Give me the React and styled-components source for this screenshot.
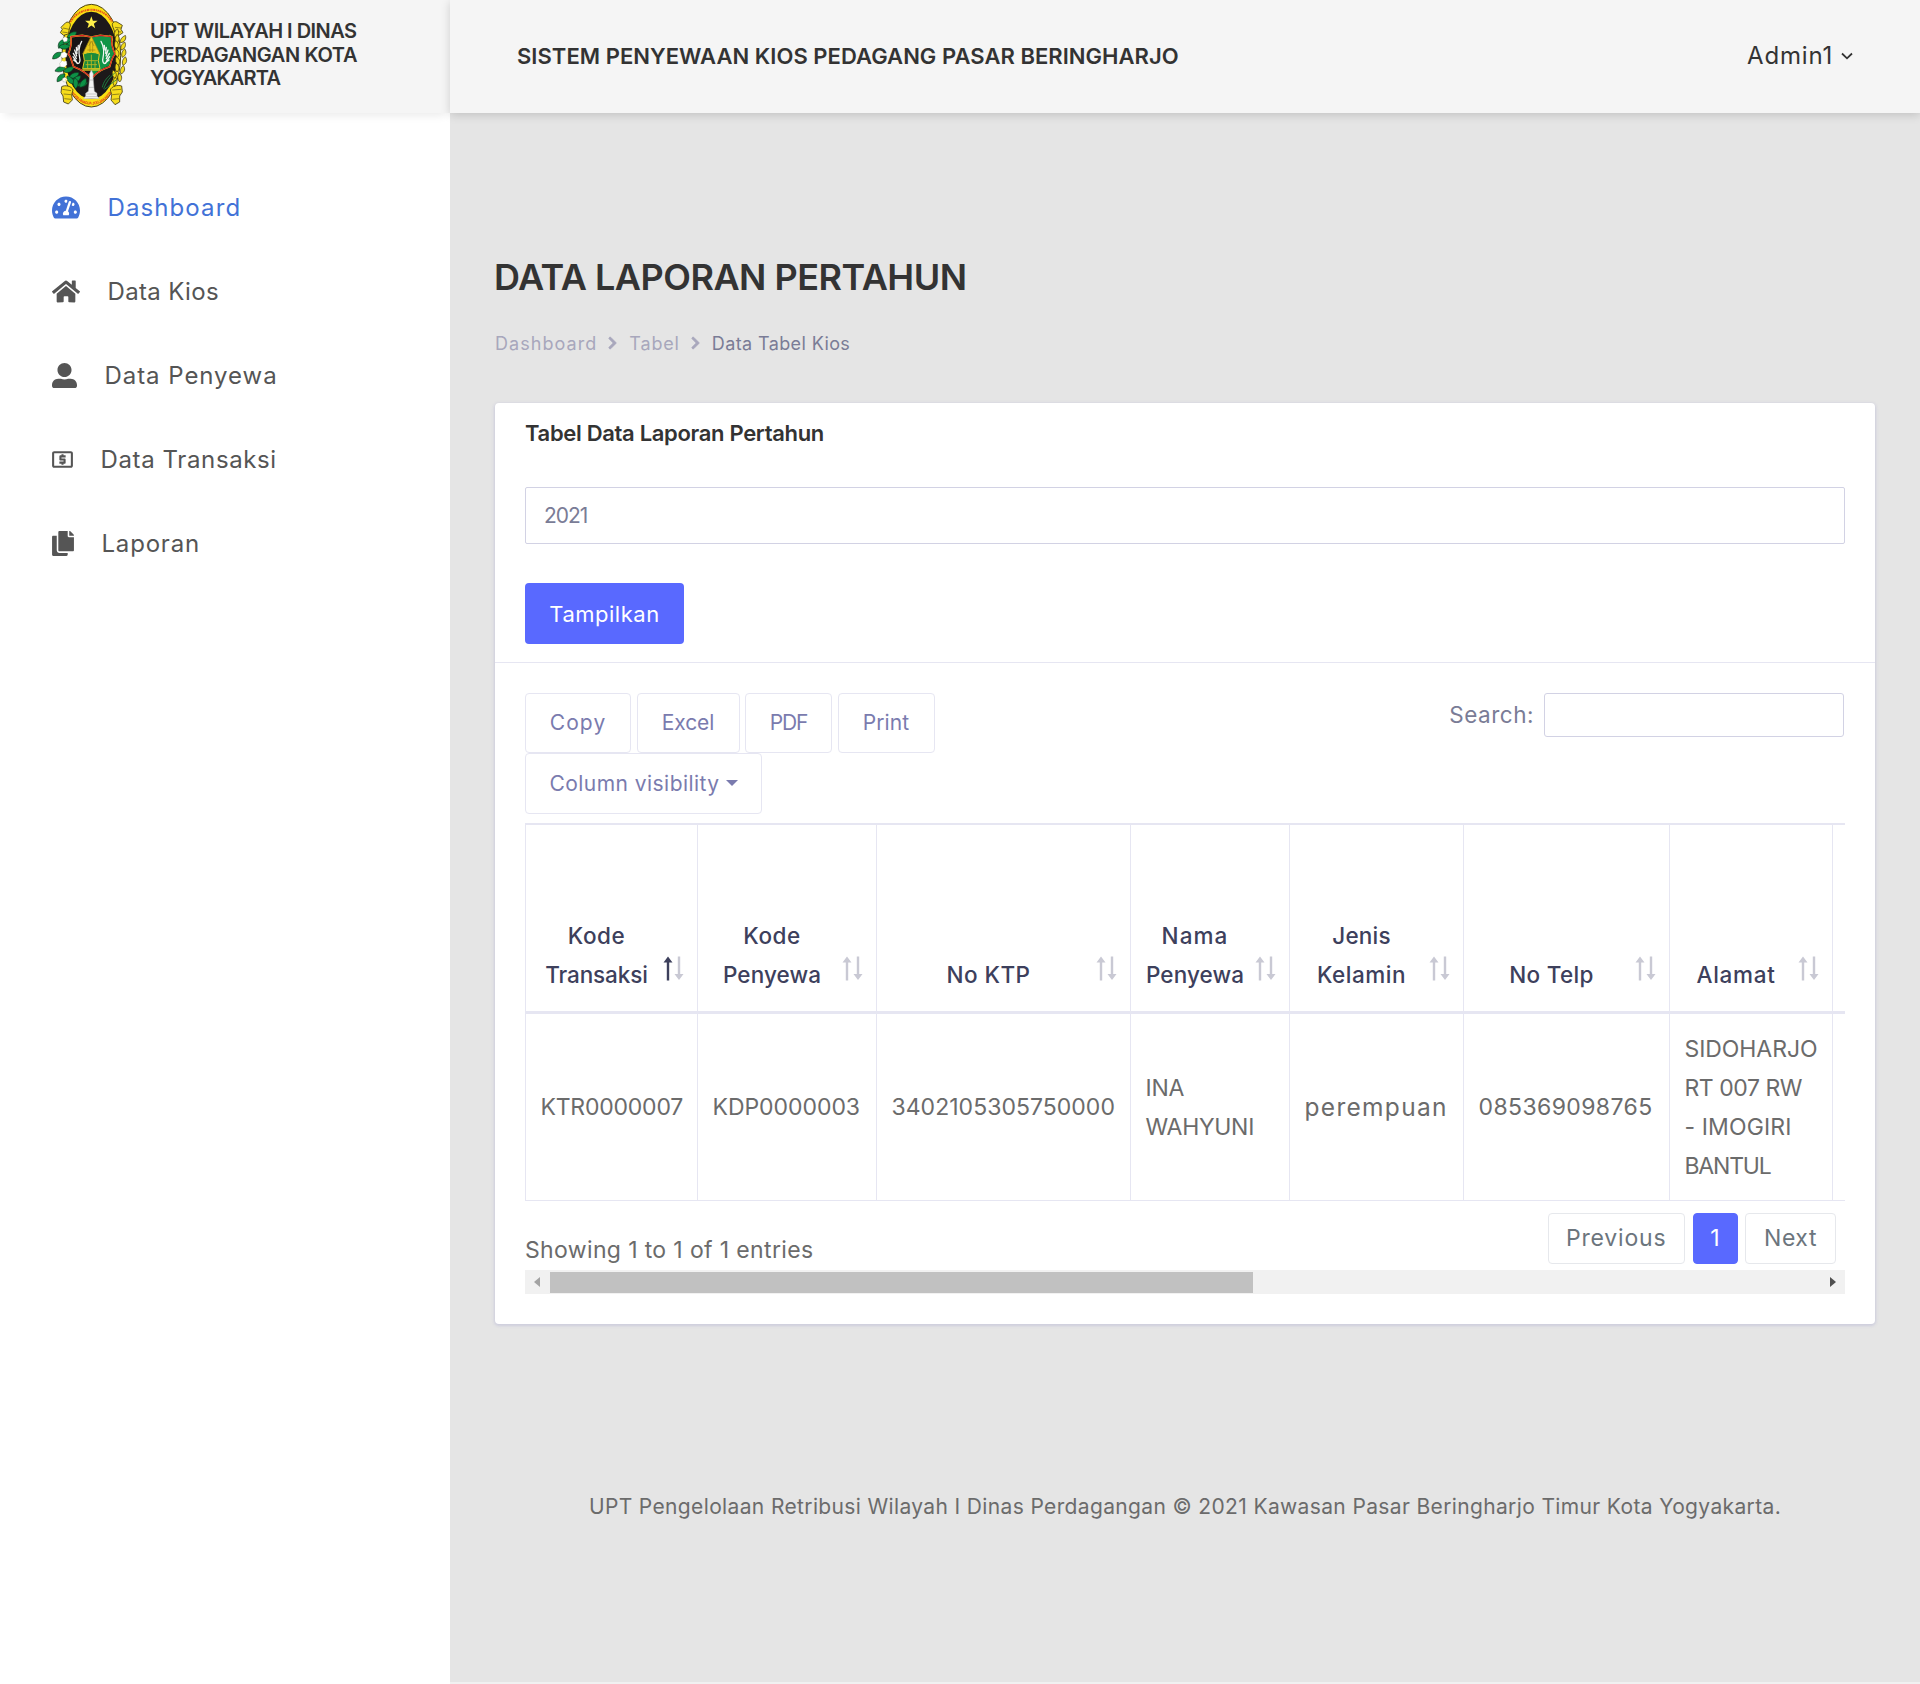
import React from "react";
import styled, { createGlobalStyle } from "styled-components";
import { FaTachometerAlt, FaHome, FaUserAlt, FaCopy, FaChevronRight } from "react-icons/fa";
import { MdLocalAtm } from "react-icons/md";

const color = {
  primary: "#5969ff",
  link: "#4272d7",
  heading: "#333333",
  body: "#6b6b6b",
  muted: "#7a7c96",
  line: "#e6e6f2",
  field: "#d2d2e4",
};

const GlobalStyle = createGlobalStyle`
  *, *::before, *::after { box-sizing: border-box; }
  body {
    margin: 0;
    background: #fff;
    color: ${color.body};
    font-family: Inter, "Open Sans", sans-serif;
    font-size: 23px;
    font-weight: 400;
    font-kerning: normal;
  }
  h1, h2, h3, p, ul, ol { margin: 0; padding: 0; list-style: none; }
  button, input { font: inherit; }
`;

const Text = styled.span`
  letter-spacing: ${(p) => p.$track || 0}px;
  white-space: nowrap;
  ${(p) => p.$size && `font-size: ${p.$size}px;`}
`;

/* ---------- frame ---------- */

const Page = styled.div`
  display: grid;
  grid-template-columns: 450px 1fr;
  grid-template-rows: 113px 1fr;
  height: 1684px;
  overflow: hidden;
`;

const Brand = styled.a`
  display: flex;
  align-items: flex-start;
  padding-left: 41px;
  background: #f5f5f5;
  box-shadow: 0 8px 8px -5px rgba(0, 0, 0, 0.08);
  z-index: 1;
`;

const BrandName = styled.h3`
  display: flex;
  flex-direction: column;
  margin: 20px 0 0 9px;
  color: ${color.heading};
  font-size: 20px;
  font-weight: 600;
  line-height: 23.5px;
`;

const TopBar = styled.header`
  display: flex;
  align-items: center;
  justify-content: space-between;
  padding: 0 67px 2px 67px;
  background: #f5f5f5;
  box-shadow: 0 2px 9px rgba(0, 0, 0, 0.16);
  z-index: 2;
`;

const AppTitle = styled.h3`
  color: ${color.heading};
  font-size: 22px;
  font-weight: 600;
`;

const Account = styled.div`
  display: flex;
  align-items: center;
  gap: 8px;
  color: ${color.heading};
  font-weight: 400;
`;

/* ---------- sidebar ---------- */

const Sidebar = styled.nav`
  padding: 52px 0 0 52px;
  background: #fff;
`;

const NavItem = styled.a`
  display: flex;
  align-items: center;
  gap: 27.5px;
  height: 84px;
  color: ${(p) => (p.$active ? color.link : "#555555")};
  font-size: 24px;

  svg {
    flex: none;
    width: ${(p) => p.$icon}px;
    height: 25px;
    margin: 0 ${(p) => (p.$inset ? -2 : 0)}px;
  }
`;

/* ---------- content ---------- */

const Main = styled.main`
  display: flex;
  flex-direction: column;
  margin-bottom: 2px;
  padding: 140px 45px 0;
  background: #e5e5e5;
  box-shadow: 0 2px 0 #f1f1f1;
`;

const PageTitle = styled.h1`
  margin-left: -1px;
  color: ${color.heading};
  font-size: 36px;
  font-weight: 600;
  line-height: 48px;
`;

const Breadcrumb = styled.ol`
  display: flex;
  align-items: center;
  height: 30px;
  margin: 27px 0 45px 0;
  color: #a8a7bc;
  font-size: 18px;

  li { display: flex; align-items: center; }
  li:last-child { color: ${color.muted}; }
  svg {
    width: 9px;
    height: 14px;
    margin: 0 12px 0 11px;
    stroke: currentColor;
    stroke-width: 30px;
  }
`;

const Card = styled.section`
  height: 921px;
  background: #fff;
  border-radius: 4px;
  box-shadow: 0 1px 3px 1px rgba(154, 154, 204, 0.32);
`;

const CardHead = styled.div`
  height: 260px;
  padding: 17px 30px 0;
  border-bottom: 1px solid ${color.line};
`;

const CardTitle = styled.h3`
  color: ${color.heading};
  font-size: 22px;
  font-weight: 600;
  line-height: 27px;
`;

const YearField = styled.div`
  display: flex;
  align-items: center;
  height: 57px;
  margin: 40px 0 39px;
  padding-left: 18px;
  border: 1px solid ${color.field};
  border-radius: 2px;
  color: ${color.muted};
  font-size: 21px;
`;

const Submit = styled.button`
  display: flex;
  align-items: center;
  justify-content: center;
  width: 159px;
  height: 61px;
  padding: 0;
  border: 0;
  border-radius: 4px;
  background: ${color.primary};
  color: #fff;
  font-size: 22px;
  font-weight: 400;
`;

const CardBody = styled.div`
  padding: 30px;
`;

const Toolbar = styled.div`
  display: flex;
  justify-content: space-between;
  height: 130px;
  padding-right: 1px;
`;

const ExportButtons = styled.div`
  display: flex;
  flex-wrap: wrap;
  align-content: flex-start;
  gap: 0 5.5px;
  width: 440px;
`;

const ExportButton = styled.button`
  display: flex;
  align-items: center;
  justify-content: center;
  gap: 6px;
  width: ${(p) => p.$width}px;
  height: ${(p) => p.$height || 60}px;
  padding: 0 0 1px;
  border: 1px solid ${color.line};
  border-radius: 4px;
  background: #fff;
  color: #7a7bae;
  font-size: 21px;
`;

const Caret = styled.i`
  border: 6px solid transparent;
  border-top-color: currentColor;
  border-bottom: 0;
`;

const Search = styled.label`
  display: flex;
  align-items: center;
  gap: 10px;
  height: 44px;
  color: ${color.muted};
  font-size: 22.5px;

  ${Text} { padding-bottom: 2px; }
`;

const SearchInput = styled.input`
  width: 300px;
  height: 44px;
  border: 1px solid ${color.field};
  border-radius: 3px;
  background: #fff;
`;

/* ---------- table ---------- */

const Table = styled.table`
  width: 1320px;
  table-layout: fixed;
  border-collapse: separate;
  border-spacing: 0;
  line-height: 39px;
`;

const HeadCell = styled.th`
  position: relative;
  width: ${(p) => p.$width}px;
  height: 191px;
  padding: 0 ${(p) => (p.$width > 20 ? "40px 17px 10px" : "0")};
  border: solid ${color.line};
  border-width: 2px 0 3px 1px;
  color: #3d405c;
  font-size: 22.5px;
  font-weight: 500;
  text-align: center;
  vertical-align: bottom;
`;

const SortMark = styled.svg`
  position: absolute;
  right: 11px;
  bottom: 30px;
  width: 24px;
  height: 25px;
`;

const Cell = styled.td`
  height: 187px;
  padding: ${(p) => (p.$empty ? 0 : "1px 0 0 14.5px")};
  border: solid ${color.line};
  border-width: 0 0 1px 1px;
  vertical-align: middle;
`;

const TableFoot = styled.div`
  display: flex;
  justify-content: space-between;
  height: 69px;
  padding: 12px 9px 0 0;
`;

const Summary = styled.div`
  padding-top: 23px;
  line-height: 28px;
`;

const Pager = styled.div`
  display: flex;
  gap: 7.5px;
`;

const PageButton = styled.button`
  display: flex;
  align-items: center;
  justify-content: center;
  width: ${(p) => p.$width}px;
  height: 51px;
  padding: 0 0 2px;
  border: 1px solid ${(p) => (p.$current ? color.primary : "#e6e8ec")};
  border-radius: 4px;
  background: ${(p) => (p.$current ? color.primary : "#fff")};
  color: ${(p) => (p.$current ? "#fff" : "#6c757d")};
`;

const ScrollTrack = styled.div`
  display: flex;
  align-items: center;
  justify-content: space-between;
  height: 24px;
  padding: 0 9px;
  background: #f1f1f1;
`;

const ScrollThumb = styled.div`
  width: 703px;
  height: 21px;
  margin: 0 auto 0 10px;
  background: #c1c1c1;
`;

const ScrollArrow = styled.i`
  border: 5.5px solid transparent;
  border-${(p) => p.$side}: 6px solid ${(p) => p.$tone};
  border-${(p) => (p.$side === "left" ? "right" : "left")}-width: 0;
`;

const Copyright = styled.footer`
  margin-top: 168px;
  font-size: 21px;
  line-height: 30px;
  text-align: center;
`;

/* ---------- drawings ---------- */

const leaf = "M0 0C4-9 14-13 24-11C22-1 12 6 0 0Z";

const leftLeaves = [
  [78, 112, -5], [72, 118, 150], [66, 128, 0], [74, 140, -10], [54, 140, 20], [62, 158, 170],
  [74, 205, 190], [68, 215, 0], [72, 222, 160], [84, 232, 0], [92, 246, -10], [78, 228, 70],
  [108, 256, 10], [116, 262, -30], [104, 266, -70],
];
const rightLeaves = [
  [222, 112, -50], [226, 130, -60], [238, 128, -30], [226, 148, -70], [240, 150, -40], [230, 172, -80],
  [244, 172, -50], [232, 196, -80], [246, 196, -50], [228, 216, -70], [240, 222, -50], [222, 236, -80],
  [236, 246, -70], [220, 258, -60], [212, 130, -80],
];

const Emblem = () => (
  <svg width="100" height="115" viewBox="0 0 300 345">
    <ellipse cx="151" cy="167" rx="88" ry="154" fill="#fbe112" stroke="#4a4318" strokeWidth="3" />
    <ellipse cx="151" cy="166" rx="78" ry="131" fill="#1d191a" />
    <path d="M88 66C116 17 186 17 214 66" fill="none" stroke="#e5531b" strokeWidth="6" strokeDasharray="4 2 6 2 3 2" />
    <path id="emblem-motto" d="M91 279C118 326 184 326 213 277" fill="none" />
    <text fill="#e5401b" fontSize="12" fontWeight="700" fontFamily="Liberation Sans, sans-serif">
      <textPath href="#emblem-motto" textLength="148">KOTA PRADJA JOGJAKARTA</textPath>
    </text>
    <g fill="#f6dc1c" stroke="#3d3714" strokeWidth="2.5">
      <path d="M74 68C84 62 92 72 86 82L82 102L68 106L58 98L64 88L60 82Z" />
      <path d="M228 66C218 62 210 70 216 82L222 98L234 106L246 98L240 88L244 76Z" />
      <path d="M62 260C72 254 92 258 96 270L92 284L94 300L82 312L68 306L66 288L60 278Z" />
      <path d="M242 258C230 254 212 258 208 270L212 284L210 300L222 314L236 306L236 288L244 276Z" />
    </g>
    <g fill="none" stroke="#3d3714" strokeWidth="1.6">
      <path d="M66 84L84 88M64 96L80 98M64 268L90 272M68 282L90 284M70 296L90 298" />
      <path d="M222 82L240 84M224 94L240 96M214 270L240 268M214 284L236 282M214 298L234 296" />
    </g>
    <g fill="#0d9146" stroke="#12351f" strokeWidth="1.5">
      {leftLeaves.map(([x, y, r], i) => (
        <path key={i} d={leaf} transform={`translate(${x} ${y}) rotate(${r}) scale(1.25)`} />
      ))}
    </g>
    <g fill="#fff" stroke="#87906f" strokeWidth="1">
      <path d="M64 116l8-6 8 5-2 9-9 2zM60 160l10-5 9 6-2 10-12 4-6-6zM56 190l9-10 12 4 1 10-8 8-12-2zM64 236l8-4 7 6-4 8-9-1z" />
    </g>
    <path d="M60 180l8-4 6 4-4 5zM70 240l5-2 3 5z" fill="#f4df2c" />
    <g fill="#f1da1d" stroke="#3b3510" strokeWidth="2">
      {rightLeaves.map(([x, y, r], i) => (
        <path key={i} d={leaf} transform={`translate(${x} ${y}) rotate(${r})`} />
      ))}
    </g>
    <path d="M188 266C196 246 206 232 222 218M190 268C206 258 214 246 226 240M184 262C188 244 196 236 206 226" fill="none" stroke="#1b8b43" strokeWidth="2.5" />
    <path d="M151 49l4.700 13.200 14 .3-11.200 8.500 4.100 13.400-11.600-8-11.600 8 4.100-13.400-11.200-8.500 14-.3z" fill="#fff04a" />
    <path d="M90 110L124 106 151 111 178 106 212 110C210 132 216 150 222 162C212 172 210 188 206 200C188 206 170 212 151 236C132 212 114 206 98 200C92 188 92 172 82 162C88 148 92 130 90 110Z" fill="#161414" stroke="#f0d51e" strokeWidth="5" />
    <path d="M151 112L178 108 210 112C208 132 214 150 219 162C210 172 207 186 203 198C186 204 168 212 151 232Z" fill="#119447" />
    <path d="M90 110L124 106 151 111 178 106 212 110C210 132 216 150 222 162C212 172 210 188 206 200C188 206 170 212 151 236C132 212 114 206 98 200C92 188 92 172 82 162C88 148 92 130 90 110Z" fill="none" stroke="#d8232a" strokeWidth="3.500" />
    <path d="M151 108L177 162H125Z" fill="#e7c91c" stroke="#9a7f12" strokeWidth="2" />
    <path d="M143 138l8-14 8 14M139 150h24M147 122v36M155 122v36" fill="none" stroke="#8d7410" strokeWidth="1.600" />
    <path d="M127 162Q151 152 175 162L172 182 177 206H125L130 182Z" fill="#1c8a3c" stroke="#e4cb20" strokeWidth="3" />
    <path d="M132 182h38M134 194h34M151 164v40M140 184v20M162 184v20" stroke="#c4ba20" strokeWidth="2.500" fill="none" />
    <path d="M124 210H178" stroke="#e8d020" strokeWidth="4" />
    <g fill="none" stroke="#f2f5f3" strokeWidth="3.800" strokeLinecap="round">
      <path d="M122 124C112 140 112 158 117 180C116 194 108 192 106 186M112 136L110 150M106 142L108 160M101 150L107 168M97 160L106 176M96 170L106 184M98 180L110 190" />
      <path d="M180 124C190 140 190 158 185 180C186 194 194 192 196 186M190 136L192 150M196 142L194 160M201 150L195 168M205 160L196 176M206 170L196 184M204 180L192 190" />
    </g>
    <path d="M151 210l6 12-1 8 4 44 8 6v8l7 8h-48l7-8v-8l8-6 4-44-1-8z" fill="#f3f3f3" stroke="#aaa" strokeWidth="1.500" />
    <path d="M146 240h10M143 262h16M136 282h30M132 290h38" stroke="#999" strokeWidth="1.500" />
  </svg>
);

const Chevron = () => (
  <svg width="12" height="8" viewBox="0 0 12 8">
    <path d="M1 1.500L6 6.300 11 1.500" fill="none" stroke="currentColor" strokeWidth="1.800" />
  </svg>
);

const Sort = ({ ascending }) => (
  <SortMark viewBox="0 0 24 25">
    <path d="M6 .5L10.500 6.500H7.200V24.500H4.800V6.500H1.500Z" fill={ascending ? "#3d405c" : "#c9c9d4"} />
    <path d="M17 24L12.500 18H15.800V.5H18.200V18H21.500Z" fill="#c9c9d4" />
  </SortMark>
);

/* ---------- data ---------- */

const brandLines = [
  ["UPT WILAYAH I DINAS", -0.52],
  ["PERDAGANGAN KOTA", -0.36],
  ["YOGYAKARTA", -0.8],
];

const nav = [
  { label: "Dashboard", Icon: FaTachometerAlt, icon: 28, track: 1.1, active: true },
  { label: "Data Kios", Icon: FaHome, icon: 28, track: 0.35 },
  { label: "Data Penyewa", Icon: FaUserAlt, icon: 25, track: 0.95 },
  { label: "Data Transaksi", Icon: MdLocalAtm, icon: 25, track: 0.62, inset: true },
  { label: "Laporan", Icon: FaCopy, icon: 22, track: 0.8 },
];

const exportsRow = [
  ["Copy", 106, 1.1],
  ["Excel", 103, -0.1],
  ["PDF", 87, -1.1],
  ["Print", 97, 0.1],
];

const columns = [
  { width: 172, head: [["Kode", 0.55], ["Transaksi", -0.12]], cell: [["KTR0000007", -0.22]], ascending: true },
  { width: 179, head: [["Kode", 0.55], ["Penyewa", 0.08]], cell: [["KDP0000003", -0.05]] },
  { width: 254, head: [["No KTP", 0.47]], cell: [["3402105305750000", 0.03]] },
  { width: 159, head: [["Nama", 1.1], ["Penyewa", 0.08]], cell: [["INA", -0.29], ["WAHYUNI", -0.29]] },
  { width: 174, head: [["Jenis", 0.2], ["Kelamin", 0.5]], cell: [["perempuan", 1.3, 24.5]] },
  { width: 206, head: [["No Telp", 0.3]], cell: [["085369098765", 0.39]] },
  {
    width: 163,
    head: [["Alamat", 0.7]],
    cell: [["SIDOHARJO", -0.07], ["RT 007 RW", -0.46], ["- IMOGIRI", 0.12], ["BANTUL", -1.2]],
  },
  { width: 13, head: [], cell: [] },
];

const Lines = ({ lines }) =>
  lines.map(([text, track, size], i) => (
    <React.Fragment key={text}>
      {i > 0 && <br />}
      <Text $track={track} $size={size}>{text}</Text>
    </React.Fragment>
  ));

export default function App() {
  return (
    <>
      <GlobalStyle />
      <Page>
        <Brand>
          <Emblem />
          <BrandName>
            {brandLines.map(([line, track]) => (
              <Text key={line} $track={track}>{line}</Text>
            ))}
          </BrandName>
        </Brand>
        <TopBar>
          <AppTitle>
            <Text $track={0.04}>SISTEM PENYEWAAN KIOS PEDAGANG PASAR BERINGHARJO</Text>
          </AppTitle>
          <Account>
            <Text $track={0.8} $size={24}>Admin1</Text>
            <Chevron />
          </Account>
        </TopBar>

        <Sidebar>
          {nav.map(({ label, Icon, icon, track, active, inset }) => (
            <NavItem key={label} $active={active} $icon={icon} $inset={inset}>
              <Icon />
              <Text $track={track}>{label}</Text>
            </NavItem>
          ))}
        </Sidebar>

        <Main>
          <PageTitle>
            <Text $track={-0.5}>DATA LAPORAN PERTAHUN</Text>
          </PageTitle>
          <Breadcrumb>
            <li><Text $track={1.05}>Dashboard</Text><FaChevronRight /></li>
            <li><Text $track={0.84}>Tabel</Text><FaChevronRight /></li>
            <li><Text $track={0.39}>Data Tabel Kios</Text></li>
          </Breadcrumb>

          <Card>
            <CardHead>
              <CardTitle><Text $track={-0.32}>Tabel Data Laporan Pertahun</Text></CardTitle>
              <YearField><Text $track={-1}>2021</Text></YearField>
              <Submit><Text $track={0.5}>Tampilkan</Text></Submit>
            </CardHead>
            <CardBody>
              <Toolbar>
                <ExportButtons>
                  {exportsRow.map(([label, width, track]) => (
                    <ExportButton key={label} $width={width}><Text $track={track}>{label}</Text></ExportButton>
                  ))}
                  <ExportButton $width={237} $height={61}>
                    <Text $track={0.46}>Column visibility</Text>
                    <Caret />
                  </ExportButton>
                </ExportButtons>
                <Search>
                  <Text $track={0.5}>Search:</Text>
                  <SearchInput />
                </Search>
              </Toolbar>

              <Table>
                <thead>
                  <tr>
                    {columns.map((c, i) => (
                      <HeadCell key={i} $width={c.width}>
                        <Lines lines={c.head} />
                        {c.head.length > 0 && <Sort ascending={c.ascending} />}
                      </HeadCell>
                    ))}
                  </tr>
                </thead>
                <tbody>
                  <tr>
                    {columns.map((c, i) => (
                      <Cell key={i} $empty={c.cell.length === 0}><Lines lines={c.cell} /></Cell>
                    ))}
                  </tr>
                </tbody>
              </Table>

              <TableFoot>
                <Summary><Text $track={0.36}>Showing 1 to 1 of 1 entries</Text></Summary>
                <Pager>
                  <PageButton $width={137.5}><Text $track={0.82}>Previous</Text></PageButton>
                  <PageButton $width={45} $current>1</PageButton>
                  <PageButton $width={91}><Text $track={0.56}>Next</Text></PageButton>
                </Pager>
              </TableFoot>
              <ScrollTrack>
                <ScrollArrow $side="right" $tone="#a3a3a3" />
                <ScrollThumb />
                <ScrollArrow $side="left" $tone="#505050" />
              </ScrollTrack>
            </CardBody>
          </Card>

          <Copyright>
            <Text $track={0.36}>
              UPT Pengelolaan Retribusi Wilayah I Dinas Perdagangan © 2021 Kawasan Pasar Beringharjo Timur Kota Yogyakarta.
            </Text>
          </Copyright>
        </Main>
      </Page>
    </>
  );
}
